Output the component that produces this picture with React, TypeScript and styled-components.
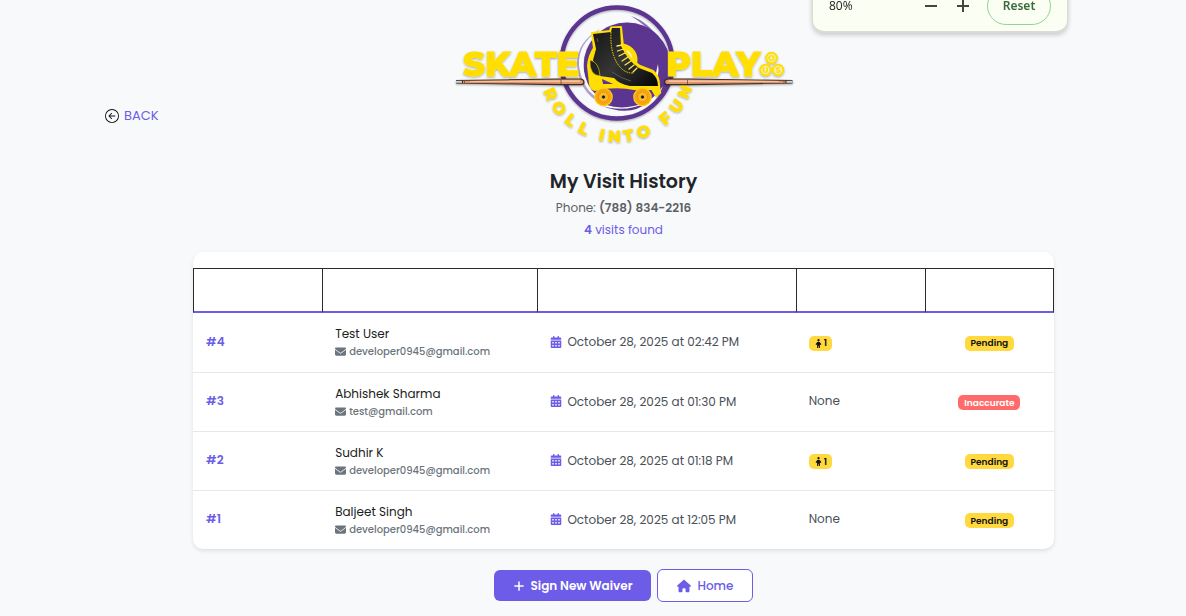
import React from 'react';
import styled, { createGlobalStyle } from 'styled-components';
import { FaEnvelope, FaCalendarDays, FaChild, FaPlus, FaHouse } from 'react-icons/fa6';
import { BsArrowLeftCircle } from 'react-icons/bs';

const GlobalStyle = createGlobalStyle`
  *, *::before, *::after { box-sizing: border-box; }
  html { background: #f8f9fb; overflow: hidden; }
  body {
    margin: 0;
    background: #f8f9fb;
    color: #212529;
    font-family: Poppins, Inter, 'Liberation Sans', sans-serif;
    font-size: 12px;
  }
`;

const Page = styled.div`
  padding: 0 44px 0 105px;
`;

const TopBar = styled.header`
  display: grid;
  grid-template-columns: 1fr auto 1fr;
  align-items: end;
`;

const BackLink = styled.a`
  display: inline-flex;
  align-items: center;
  gap: 5px;
  margin-bottom: 24px;
  color: #6c5ce7;
  font-size: 13px;
  line-height: 20px;
  font-weight: 400;
  text-decoration: none;

  svg { color: #111; }
`;

const Logo = styled.svg`
  display: block;
  width: 351px;
  height: 150px;
`;

const LogoWord = styled.text`
  font-family: Montserrat, Inter, sans-serif;
  font-weight: 800;
  fill: #ffde00;
  stroke: #ffde00;
`;

const ZoomPanel = styled.aside`
  position: fixed;
  top: -24px;
  right: 118px;
  width: 256px;
  height: 57px;
  display: flex;
  align-items: center;
  padding: 4px 16px 0 16px;
  border: 1px solid #d8dcd2;
  border-bottom-width: 2px;
  border-radius: 12px;
  background: #fafef3;
  box-shadow: 0 2px 5px rgba(0, 0, 0, 0.2);
  font-family: 'Open Sans', 'Noto Sans', sans-serif;
`;

const ZoomValue = styled.span`
  flex: 1;
  color: #222;
  font-size: 12px;
  line-height: 12px;
`;

const ZoomButton = styled.button`
  width: 32px;
  height: 32px;
  padding: 0;
  border: 0;
  background: none;
  color: #43483e;
  display: grid;
  place-items: center;
`;

const ResetButton = styled.button`
  width: 64px;
  height: 38px;
  margin-left: 8px;
  border: 1px solid #94d690;
  border-radius: 19px;
  background: transparent;
  color: #386a3c;
  font-family: 'Noto Sans', 'Open Sans', sans-serif;
  font-size: 12px;
  line-height: 12px;
  font-weight: 600;
  padding: 0;
`;

const Intro = styled.section`
  padding-top: 17px;
  text-align: center;
`;

const Title = styled.h1`
  margin: 0;
  font-size: 19px;
  line-height: 30px;
  font-weight: 600;
`;

const Line = styled.p<{ $accent?: boolean }>`
  margin: 0;
  font-size: 12px;
  line-height: 22px;
  color: ${(p) => (p.$accent ? '#6c5ce7' : '#5c6166')};

  strong { font-weight: 600; }
`;

const Card = styled.div`
  margin: 11px 88px 0;
  padding-top: 16px;
  overflow: hidden;
  border-radius: 10px;
  background: #fff;
  box-shadow: 0 2px 4px rgba(0, 0, 0, 0.1);
`;

const Table = styled.table`
  width: 100%;
  table-layout: fixed;
  border-collapse: separate;
  border-spacing: 0;
`;

const HeadCell = styled.th<{ $width: number }>`
  width: ${(p) => p.$width}%;
  height: 45px;
  padding: 0;
  border: solid #2b2b2b;
  border-width: 1px 0 2px 1px;
  border-bottom-color: #6c5ce7;

  &:last-child { border-right-width: 1px; }
`;

const Row = styled.tr`
  & + & td { border-top: 1px solid #e6e8ea; }
`;

const Cell = styled.td<{ $center?: boolean }>`
  height: 59px;
  padding: 0 13px 2px;
  vertical-align: middle;
  line-height: 18px;
  color: #495057;
  text-align: ${(p) => (p.$center ? 'center' : 'left')};
`;

const PersonCell = styled(Cell)`
  padding-bottom: 0;
`;

const VisitId = styled.span`
  color: #6c5ce7;
  font-weight: 600;
`;

const Name = styled.div`
  color: #1b1d20;
`;

const IconText = styled.div<{ $small?: boolean }>`
  display: flex;
  align-items: center;
  gap: ${(p) => (p.$small ? 3 : 5)}px;
  font-size: ${(p) => (p.$small ? 10 : 12)}px;
  font-weight: ${(p) => (p.$small ? 500 : 400)};
  line-height: 17px;
  color: ${(p) => (p.$small ? '#6c757d' : '#495057')};
  white-space: nowrap;

  svg { color: ${(p) => (p.$small ? '#6c757d' : '#6c5ce7')}; flex: none; }
`;

const Badge = styled.span<{ $danger?: boolean; $count?: boolean }>`
  display: inline-flex;
  align-items: center;
  gap: ${(p) => (p.$count ? 1 : 0)}px;
  height: 15px;
  margin-top: 2px;
  padding: 0 ${(p) => (p.$count ? 5 : 6)}px;
  border-radius: 5px;
  vertical-align: middle;
  font-size: 9px;
  font-weight: 600;
  color: ${(p) => (p.$danger ? '#fff' : '#111')};
  background: ${(p) => (p.$danger ? '#ff6b6b' : '#ffd93d')};
`;

const Actions = styled.div`
  display: flex;
  justify-content: center;
  align-items: center;
  gap: 6px;
  padding: 20px 0 14px;
`;

const ActionButton = styled.button<{ $outline?: boolean }>`
  display: inline-flex;
  align-items: center;
  justify-content: center;
  gap: 6px;
  height: ${(p) => (p.$outline ? 33 : 31)}px;
  padding: 0 19px;
  border: ${(p) => (p.$outline ? '1px solid #6c5ce7' : '0')};
  border-radius: 6px;
  background: ${(p) => (p.$outline ? '#fff' : '#6c5ce7')};
  color: ${(p) => (p.$outline ? '#6c5ce7' : '#fff')};
  font-family: inherit;
  font-size: 12px;
  font-weight: ${(p) => (p.$outline ? 500 : 600)};
`;

type Visit = { id: number; name: string; email: string; date: string; minors: number; status: string };

const visits: Visit[] = [
  { id: 4, name: 'Test User', email: 'developer0945@gmail.com', date: 'October 28, 2025 at 02:42 PM', minors: 1, status: 'Pending' },
  { id: 3, name: 'Abhishek Sharma', email: 'test@gmail.com', date: 'October 28, 2025 at 01:30 PM', minors: 0, status: 'Inaccurate' },
  { id: 2, name: 'Sudhir K', email: 'developer0945@gmail.com', date: 'October 28, 2025 at 01:18 PM', minors: 1, status: 'Pending' },
  { id: 1, name: 'Baljeet Singh', email: 'developer0945@gmail.com', date: 'October 28, 2025 at 12:05 PM', minors: 0, status: 'Pending' },
];

const columns = [15, 25, 30, 15, 15];

// Tagline letters and their angle round the ring, 0 being straight down.
const tagline: [string, number][] = [
  ['R', 65], ['O', 52], ['L', 39], ['L', 27],
  ['I', 12], ['N', 2], ['T', -9], ['O', -21],
  ['F', -41], ['U', -54], ['N', -67],
];

function Cue() {
  return (
    <g>
      <path d="M456 80 L560 78.500 H581 Q584.500 79 584.500 82 Q584.500 85.200 581 85.200 H560 L456 83.500 Z" fill="#3a2a22" />
      <path d="M463 80.800 L561 79.600 H580 Q583.300 80 583.300 82 Q583.300 84 580 84 H561 L463 82.900 Z" fill="#dc9468" />
      <path d="M470 81 L561 80.300 H580 V82 H470 Z" fill="#f6c19c" />
      <path d="M456 80.800 h6 v2 h-6 Z" fill="#cfd6da" />
      <path d="M561 79.600 v4.400 M464.500 80.800 v2.200" stroke="#6b402a" strokeWidth="0.700" />
    </g>
  );
}

function Wheel({ x, y }: { x: number; y: number }) {
  return (
    <g>
      <circle cx={x} cy={y} r="9.300" fill="#ffd21a" />
      <circle cx={x} cy={y} r="8.200" fill="#f7a511" />
      <circle cx={x} cy={y} r="5" fill="#ffb91f" stroke="#e88f0a" strokeWidth="0.800" />
      <circle cx={x} cy={y} r="2" fill="#161616" stroke="#ffe36a" strokeWidth="0.600" />
    </g>
  );
}

function Ball({ x, y, label }: { x: number; y: number; label: string }) {
  return (
    <g>
      <circle cx={x} cy={y} r="5.200" fill="#f5efc0" stroke="#ffde00" strokeWidth="2" />
      <LogoWord x={x} y={y + 3} fontSize="8" strokeWidth="0" textAnchor="middle">{label}</LogoWord>
    </g>
  );
}

function SkateLogo() {
  return (
    <Logo viewBox="448 0 351 150" role="img" aria-label="Skate O Play">
      <defs>
        <filter id="soft" x="-10%" y="-10%" width="120%" height="125%">
          <feDropShadow dx="0" dy="1" stdDeviation="0.800" floodColor="#000" floodOpacity="0.350" />
        </filter>
        <linearGradient id="boot" x1="0" y1="0" x2="1" y2="1">
          <stop offset="0" stopColor="#151515" />
          <stop offset="0.500" stopColor="#353535" />
          <stop offset="1" stopColor="#050505" />
        </linearGradient>
      </defs>

      <g filter="url(#soft)">
        <circle cx="617" cy="63" r="55.500" fill="none" stroke="#5b3591" strokeWidth="4.500" />
        <circle cx="627" cy="66" r="43.500" fill="#5b3591" />
      </g>
      <path d="M600 29 Q577 42 577 63 Q578 92 602 104 Q616 110 630 107 Q603 104 590 88 Q569 58 600 29 Z" fill="#5b3591" opacity="0.450" />
      <path d="M598 31 Q578 44 579 65 Q582 96 612 105 Q594 97 588 84 Q575 56 598 31 Z" fill="#f8f9fb" />
      <path d="M592 98 Q611 111 634 106 Q653 102 663 86 Q655 109 627 114 Q604 112 592 98 Z" fill="#f8f9fb" />
      <path d="M600 105 Q624 114 648 102 Q630 118 600 105 Z" fill="#5b3591" />
      <path d="M631 16 Q649 22 659 40 Q647 26 631 16 Z" fill="#5b3591" opacity="0.700" />
      <path d="M658 64 Q660 75 654 86 Q655 75 658 64 Z" fill="#f8f9fb" />
      <path d="M608 99 Q622 102 636 97 Q624 92 608 99 Z" fill="#5b3591" />
      <circle cx="621" cy="60" r="14" fill="#f8f9fb" stroke="#ffde00" strokeWidth="5" />

      <g filter="url(#soft)">
        <LogoWord x="463" y="76" fontSize="34" strokeWidth="1">SKATE</LogoWord>
        <LogoWord x="666" y="76" fontSize="34" strokeWidth="1">PLAY</LogoWord>
        <Ball x={771.5} y={58} label="O" />
        <Ball x={765.5} y={70} label="U" />
        <Ball x={778} y={70} label="S" />
        {tagline.map(([letter, angle]) => (
          <LogoWord key={angle} x="617" y="142" fontSize="16" strokeWidth="0.400" textAnchor="middle" transform={`rotate(${angle} 617 63)`}>
            {letter}
          </LogoWord>
        ))}
        <Cue />
        <g transform="translate(1248.500 0) scale(-1 1)"><Cue /></g>
      </g>

      <path
        d="M592 33 L610 31 L611 27.500 L621 27 L623 46 Q630 60 640 66 L653 71 Q659 76 659 85 L660 93 L656 96 L652 89 H634 Q622 86 603 88 L595 90 Q591 89 590 84 Q589 74 588 66 Q589 55 594 48 Z"
        fill="#ffde00"
        stroke="#ffde00"
        strokeWidth="2"
        strokeLinejoin="round"
      />
      <path d="M602 79 L613 84 H603 Z" fill="#5b3591" />
      <path
        d="M593 34 L611 32 L612 28 H620 L621 46 Q628 61 639 68 L652 73 Q658 78 658 86 H630 Q619 84 614 78 L600 76 Q594 70 593 60 L596 49 Z"
        fill="url(#boot)"
      />
      <path d="M590 60 Q599 62 600 76 Q589 75 590 60 Z" fill="#222" stroke="#ffde00" strokeWidth="0.600" />
      <path d="M611 32 Q610 51 617 63 Q624 74 634 73" fill="none" stroke="#ffde00" strokeWidth="1" strokeDasharray="1.500 1" />
      <path d="M617 46 l5 -1 M617.500 51 l6 -2 M619 56 l6 -3 M622 61 l6 -4 M625 65 l6 -4 M629 69 l5 -4 M633 72 l4 -4" stroke="#ffe64a" strokeWidth="1.300" strokeLinecap="round" />
      <path d="M597 38 l1 4 M612 72 Q622 79 631 81" stroke="#5a5a5a" strokeWidth="1" fill="none" />
      <Wheel x={603.5} y={97} />
      <Wheel x={642.5} y={97} />
    </Logo>
  );
}

export default function App() {
  return (
    <>
      <GlobalStyle />
      <ZoomPanel aria-label="Zoom">
        <ZoomValue>80%</ZoomValue>
        <ZoomButton type="button" aria-label="Zoom out">
          <svg width="12" height="12"><path d="M0 6h12" stroke="currentColor" strokeWidth="2" /></svg>
        </ZoomButton>
        <ZoomButton type="button" aria-label="Zoom in">
          <svg width="12" height="12"><path d="M0 6h12M6 0v12" stroke="currentColor" strokeWidth="2" /></svg>
        </ZoomButton>
        <ResetButton type="button">Reset</ResetButton>
      </ZoomPanel>

      <Page>
        <TopBar>
          <div>
            <BackLink href="#back"><BsArrowLeftCircle size={14} />BACK</BackLink>
          </div>
          <SkateLogo />
        </TopBar>

        <main>
          <Intro>
            <Title>My Visit History</Title>
            <Line>Phone: <strong>(788) 834-2216</strong></Line>
            <Line $accent><strong>4</strong> visits found</Line>
          </Intro>

          <Card>
            <Table>
              <thead>
                <tr>{columns.map((width, i) => <HeadCell key={i} $width={width} scope="col" />)}</tr>
              </thead>
              <tbody>
                {visits.map((v) => (
                  <Row key={v.id}>
                    <Cell><VisitId>#{v.id}</VisitId></Cell>
                    <PersonCell>
                      <Name>{v.name}</Name>
                      <IconText $small><FaEnvelope size={11} />{v.email}</IconText>
                    </PersonCell>
                    <Cell><IconText><FaCalendarDays size={12} />{v.date}</IconText></Cell>
                    <Cell>{v.minors ? <Badge $count><FaChild size={9} />{v.minors}</Badge> : 'None'}</Cell>
                    <Cell $center><Badge $danger={v.status === 'Inaccurate'}>{v.status}</Badge></Cell>
                  </Row>
                ))}
              </tbody>
            </Table>
          </Card>

          <Actions>
            <ActionButton type="button"><FaPlus size={12} />Sign New Waiver</ActionButton>
            <ActionButton type="button" $outline><FaHouse size={14} />Home</ActionButton>
          </Actions>
        </main>
      </Page>
    </>
  );
}
